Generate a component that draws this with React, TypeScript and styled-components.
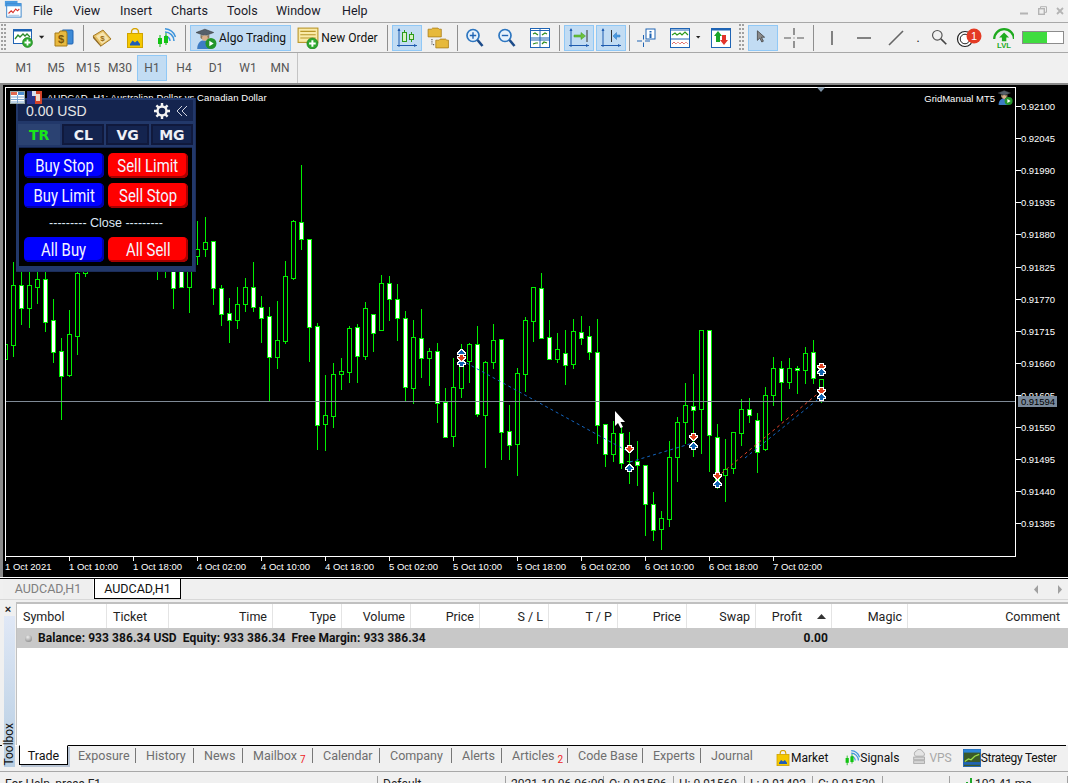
import React from "react";
import styled, { createGlobalStyle } from "styled-components";

const Global = createGlobalStyle`
  html, body { margin: 0; padding: 0; background: #f0f0f0; overflow: hidden; }
  #root { height: 783px; }
  * { box-sizing: border-box; }
`;

const UI = `Roboto, "Liberation Sans", sans-serif`;

const Page = styled.div`
  width: 1068px; height: 783px; display: flex; flex-direction: column; overflow: hidden;
  font-family: ${UI}; font-size: 12px; color: #1a1a1a; background: #f0f0f0;
`;
const MenuBar = styled.div`
  height: 23px; display: flex; align-items: center; padding: 0 0 1px 4px; border-bottom: 1px solid #a8a8a8; flex: none;
`;
const MenuItem = styled.span<{ $w: number }>`
  width: ${p => p.$w}px; font-size: 12.5px; color: #1a1a2a;
`;
const WinControls = styled.div`
  margin-left: auto; display: flex; gap: 9px; padding-right: 4px; align-items: center;
`;
const Toolbar = styled.div`
  height: 30px; display: flex; align-items: center; border-bottom: 1px solid #a8a8a8; flex: none;
`;
const Grip = styled.div<{ $ml?: number }>`
  width: 6px; height: 27px; margin-left: ${p => p.$ml ?? 0}px; margin-right: 2px;
  background: radial-gradient(circle at 1px 1px, #a0a0a0 1px, transparent 1.2px) 1px 0 / 3px 4px;
`;
const Sep = styled.div<{ $ml: number }>`
  width: 1px; height: 26px; background: #8f8f8f; margin-left: ${p => p.$ml}px; flex: none;
`;
const ToolBtn = styled.div<{ $w?: number; $ml?: number; $on?: boolean }>`
  width: ${p => p.$w ?? 30}px; height: 26px; margin-left: ${p => p.$ml ?? 0}px; flex: none;
  display: flex; align-items: center; justify-content: center; gap: 2px;
  background: ${p => (p.$on ? "#c2dcf3" : "transparent")};
  border: 1px solid ${p => (p.$on ? "#90c8f6" : "transparent")};
  font-size: 12px; color: #111; white-space: nowrap;
`;
const ProgressBar = styled.div`
  width: 42px; height: 13px; margin-left: 4px; border: 1px solid #8c8c8c; background: #fff; flex: none;
`;
const ProgressFill = styled.div`
  height: 100%; background: #3fdc3f;
`;
const TimeBar = styled.div`
  height: 32px; display: flex; align-items: center; padding-left: 8px; flex: none; border-bottom: 2px solid #8a8a8a;
`;
const TimeBtn = styled.div<{ $on?: boolean }>`
  width: ${p => (p.$on ? 30 : 32)}px; height: 26px; display: flex; align-items: center; justify-content: center;
  font-size: 12px; color: #555; flex: none;
  margin: ${p => (p.$on ? "0 1px" : "0")};
  background: ${p => (p.$on ? "#c2dcf3" : "transparent")};
  border: 1px solid ${p => (p.$on ? "#90c8f6" : "transparent")};
`;
const TimeEnd = styled.div`
  width: 1px; height: 30px; background: #c4c4c4; margin-left: 1px;
`;
const ChartArea = styled.div`
  position: relative; height: 493px; background: #000; flex: none; border-left: 3px solid #8a8a8a;
`;
const ChartSvg = styled.svg`
  display: block; font-family: "Liberation Sans", sans-serif; font-size: 9.5px;
`;
const TitleIcons = styled.div`
  position: absolute; left: 7px; top: 6px; display: flex; gap: 2px; z-index: 2;
`;
const EAPanel = styled.div`
  position: absolute; left: 13px; top: 13px; width: 180px; height: 174px; background: #22386a; padding: 2px;
  display: flex; flex-direction: column; border-right: 1px solid #1c2d5a; border-bottom: 1px solid #1c2d5a;
`;
const EAHeader = styled.div`
  height: 21px; background: #14244f; display: flex; align-items: center; padding: 0 5px 0 8px; color: #e6e6e6; gap: 6px;
  font: 14px "Liberation Sans", sans-serif; flex: none;
`;
const EAAmount = styled.span`
  margin-right: auto;
`;
const EATabs = styled.div`
  display: flex; gap: 2px; margin-top: 3px; height: 21px; flex: none;
`;
const EATab = styled.div<{ $on?: boolean }>`
  width: 43px; display: flex; align-items: center; justify-content: center;
  font: bold 14px "DejaVu Sans", "Liberation Sans", sans-serif;
  color: ${p => (p.$on ? "#19e619" : "#eef0f6")};
  background: ${p => (p.$on ? "#2b4272" : "#14244f")};
  border: ${p => (p.$on ? "0" : "2px solid #10193c")};
`;
const EABody = styled.div`
  flex: 1; background: #000; margin: 2px 1px 3px; border-top: 1px solid #14244f; padding: 5px 5px 0;
  display: grid; grid-template-columns: 80px 80px; column-gap: 4px; grid-template-rows: 25px 25px 19px 25px; row-gap: 5px; align-content: start;
`;
const EAButton = styled.div<{ $c: "blue" | "red" }>`
  border-radius: 5px; display: flex; align-items: center; justify-content: center;
  color: #f4f4ff;
  background: ${p => (p.$c === "blue" ? "#0000ff" : "#ff0000")};
  box-shadow: inset -2px -2px 0 ${p => (p.$c === "blue" ? "#0000a8" : "#a80000")};
`;
const EALabel = styled.span`
  font: 17.5px Roboto, sans-serif; transform: scaleX(0.85); white-space: nowrap;
`;
const EAClose = styled.div`
  grid-column: 1 / 3; display: flex; align-items: center; justify-content: center;
  font: 12.5px "Liberation Sans", sans-serif; color: #dde8f4; white-space: pre;
`;
const TabBar = styled.div`
  height: 21px; display: flex; flex: none; background: #f0f0f0; border-top: 1px solid #000; position: relative;
  box-shadow: 0 -1px 0 #fff;
`;
const ChartTab = styled.div<{ $on?: boolean }>`
  width: ${p => (p.$on ? 87 : 91)}px; margin-left: ${p => (p.$on ? 0 : 3)}px; height: 20px; display: flex; align-items: center; justify-content: center;
  font-size: 12.5px; color: ${p => (p.$on ? "#111" : "#808080")};
  background: ${p => (p.$on ? "#fff" : "#efefef")};
  border-right: 1px solid ${p => (p.$on ? "#000" : "#fff")};
  border-bottom: 1px solid ${p => (p.$on ? "#000" : "transparent")};
  border-left: ${p => (p.$on ? "1px solid #000" : "0")};
`;
const ScrollArrows = styled.div`
  margin-left: auto; display: flex; gap: 19px; align-items: center; padding-right: 5px;
`;
const Lower = styled.div`
  flex: none; height: 146px; display: flex; background: #f0f0f0; border-top: 1px solid #d8d8d8;
`;
const LeftStrip = styled.div`
  width: 16px; flex: none; display: flex; flex-direction: column; align-items: flex-end; padding-top: 4px;
  position: relative; z-index: 1;
`;
const CloseX = styled.div`
  width: 16px; text-align: center; font: bold 11px "Liberation Sans", sans-serif; line-height: 10px; color: #222; height: 12px; flex: none;
`;
const ToolboxBand = styled.div`
  width: 11px; height: 151px; flex: none; display: flex; align-items: flex-end; justify-content: center;
  background: linear-gradient(#e0e8f6, #b6cde2); margin-right: 1px;
`;
const ToolboxText = styled.span`
  writing-mode: vertical-rl; transform: rotate(180deg); font-size: 12px; color: #111; line-height: 11px; padding-top: 1px;
`;
const TradePane = styled.div`
  flex: 1; display: flex; flex-direction: column; background: #fff; border-top: 2px solid #c0c0c0; border-left: 1px solid #c0c0c0;
  margin-top: 2px;
`;
const HeaderRow = styled.div`
  height: 24px; display: grid; flex: none;
  grid-template-columns: 90px 62px 104px 69px 69px 69px 69px 69px 69px 69px 76px 76px 1fr;
`;
const HeadCell = styled.div<{ $left?: boolean; $last?: boolean }>`
  display: flex; align-items: center; font-size: 12.5px; color: #222; padding: 0 5px 0 6px;
  justify-content: ${p => (p.$left ? "flex-start" : "flex-end")};
  border-right: ${p => (p.$last ? "0" : "1px solid #e4e4e4")}; gap: 7px; white-space: nowrap;
  padding-right: ${p => (p.$last ? 8 : 5)}px;
`;
const SortArrow = styled.svg`
  margin-left: 8px;
`;
const BalanceRow = styled.div`
  height: 20px; background: #c8c8c8; display: flex; align-items: center; padding-left: 8px; flex: none;
  font-weight: 700; font-size: 12px; letter-spacing: 0.07px; white-space: pre; color: #111;
`;
const Bullet = styled.span`
  width: 7px; height: 7px; border-radius: 50%; margin-right: 6px; background: radial-gradient(circle at 40% 30%, #ececec, #777);
`;
const BalanceValue = styled.span`
  margin-left: auto; margin-right: 240px;
`;
const PaneFill = styled.div`
  flex: 1;
`;
const BottomBar = styled.div`
  height: 26px; display: flex; background: #f0f0f0; border-top: 1px solid #000; padding-left: 2px; flex: none; margin-right: 2px;
`;
const BottomGap = styled.div`
  width: 17px; height: 1px; margin-top: -1px; background: #fff; flex: none;
`;
const TradeTab = styled.div`
  width: 49px; height: 20px; margin-top: -1px; background: #fff; display: flex; align-items: center; justify-content: center;
  border: 1px solid #000; border-top: 1px solid #fff; font-size: 12.5px; color: #111; box-shadow: 2px 2px 0 #b8c4d4; flex: none;
`;
const BottomTab = styled.div<{ $w: number; $last?: boolean }>`
  width: ${p => p.$w}px; height: 18px; flex: none; display: flex; align-items: center; padding-left: 10px;
  font-size: 12.5px; color: #6e6e6e; white-space: nowrap; position: relative;
  &::after { content: ""; display: ${p => (p.$last ? "none" : "block")}; position: absolute; right: 0; top: 2px; bottom: 1px; width: 1px; background: #777; }
`;
const Badge = styled.span`
  color: #ee1c1c; font-size: 10px; margin-left: 3px; line-height: 1; align-self: flex-end; margin-bottom: -1px;
`;
const QuickLink = styled.div<{ $ml: number; $off?: boolean; $ls?: number }>`
  display: flex; align-items: center; margin-left: ${p => p.$ml}px; height: 24px; font-size: 12px;
  letter-spacing: ${p => p.$ls ?? 0}px;
  color: ${p => (p.$off ? "#a8a8a8" : "#111")}; white-space: nowrap;
`;
const StatusBar = styled.div`
  height: 12px; flex: none; border-top: 1px solid #a8a8a8; display: flex; background: #f0f0f0;
`;
const StatusCell = styled.div<{ $w: number }>`
  width: ${p => p.$w}px; flex: none; margin-top: 4px; padding: 1px 0 0 5px; font-size: 12px; line-height: 14px; height: 20px; white-space: nowrap;
  border-right: 1px solid #a0a0a0; display: flex; gap: 2px; color: #222;
`;
const PingSlot = styled.span`
  margin-left: 6px; display: flex;
`;

/* ---------- icons ---------- */
type SvgP = React.SVGProps<SVGSVGElement>;
const I = ({ s = 20, children, ...r }: SvgP & { s?: number }) => (
  <svg width={s} height={s} viewBox="0 0 20 20" {...r}>{children}</svg>
);
const PlusDot = ({ x = 14, y = 14 }: { x?: number; y?: number }) => (
  <g>
    <circle cx={x} cy={y} r="5" fill="#2fa82f" stroke="#1a7d1a" strokeWidth=".6" />
    <path d={`M${x - 3} ${y}h6M${x} ${y - 3}v6`} stroke="#fff" strokeWidth="1.8" />
  </g>
);
const IconLogo = () => (
  <I s={18}>
    <rect x="1" y="1" width="14" height="6" fill="#4a9ae0" />
    <rect x="3" y="4" width="16" height="15" fill="#fff" stroke="#2f7fc8" />
    <rect x="3" y="4" width="16" height="3" fill="#4a9ae0" />
    <path d="M5 15l3-3 2 2 3-4 2 2 2-2" fill="none" stroke="#d8332c" strokeWidth="1.2" />
    <path d="M5 17h12" stroke="#9ac0e0" />
  </I>
);
const IconNewChart = () => (
  <I>
    <rect x=".5" y="1.5" width="18" height="14" fill="#fff" stroke="#1f64b4" />
    <rect x=".5" y="1.5" width="18" height="2" fill="#1f64b4" />
    <path d="M2 11l3-4 2 2 3-3 2 2 2-2 3 3" fill="none" stroke="#2b8a2b" strokeWidth="1.3" />
    <PlusDot x={14.5} y={14.5} />
  </I>
);
const Caret = () => <svg width="8" height="5" viewBox="0 0 8 5"><path d="M0 0h7L3.5 4z" fill="#222" /></svg>;
const IconProfiles = () => (
  <I>
    <rect x="8" y="2" width="11" height="14" rx="1" fill="#3d8ad6" stroke="#1f64b4" />
    <path d="M1 5h4l1-2h6l1 2v13H1z" fill="#e8b93f" stroke="#a87c18" />
    <text x="7" y="15" fontSize="11" fontWeight="700" fill="#7a5608" textAnchor="middle" fontFamily="Liberation Sans">$</text>
  </I>
);
const IconBook = () => (
  <I>
    <path d="M1 8l10-6 8 9-10 7z" fill="#e6c065" stroke="#a67c28" />
    <path d="M1 8l8 10v1L1 10z" fill="#8a6420" />
    <path d="M4 8l7-4 6 7-7 5z" fill="#f7e4ad" />
    <text x="10.5" y="13" fontSize="8" fontWeight="700" fill="#9a6c10" textAnchor="middle" fontFamily="Liberation Sans">$</text>
  </I>
);
const IconBag = ({ s = 20 }: { s?: number }) => (
  <I s={s}>
    <path d="M6.5 6V4a3.5 3.5 0 017 0v2" fill="none" stroke="#d8a400" strokeWidth="1.4" />
    <rect x="2.5" y="5.5" width="15" height="14" fill="#f5c800" stroke="#cfa300" />
    <path d="M5 16l2.6-3.5 2.4 2 2.4-2L15 16v1.5H5z" fill="#1f5cb8" />
  </I>
);
const IconSignals = ({ s = 20 }: { s?: number }) => (
  <I s={s}>
    <path d="M9 8a5 5 0 015 5M9 4a9 9 0 019 9M9 .8A12.2 12.2 0 0119.5 9" fill="none" stroke="#3f95dc" strokeWidth="1.5" />
    <path d="M4 7v12M10 5v12" stroke="#12b312" />
    <rect x="2" y="10" width="4" height="6" fill="#12c412" />
    <rect x="8" y="8" width="4" height="7" fill="#12c412" />
  </I>
);
const IconHat = ({ s = 22 }: { s?: number }) => (
  <I s={s}>
    <path d="M1 5l8-3 8 3-8 3z" fill="#55606a" stroke="#333" strokeWidth=".5" />
    <path d="M5 7v3c2 2 6 2 8 0V7l-4 1.6z" fill="#8c7a5a" />
    <path d="M2 20c0-5 3-8 6-8s6 2 6 8z" fill="#3d7cc4" />
    <circle cx="9" cy="10" r="2.6" fill="#d9b08a" />
    <circle cx="14.5" cy="15" r="5" fill="#24952a" />
    <path d="M13 12.6v5l4-2.5z" fill="#fff" />
  </I>
);
const IconOrder = () => (
  <I s={22}>
    <rect x="1" y="1" width="18" height="13" fill="#faeaa8" stroke="#b89628" />
    <path d="M3 4h14M3 7h14M3 10h14" stroke="#b89628" />
    <PlusDot x={14} y={15} />
  </I>
);
const Axes = ({ children }: { children?: React.ReactNode }) => (
  <I>
    <path d="M2 1v18M0 17.5h20" stroke="#1f5cb0" strokeWidth="1" fill="none" />
    <path d="M2 0l-1.5 3h3zM20 17.5l-3-1.5v3z" fill="#1f5cb0" />
    {children}
  </I>
);
const IconCandles = () => (
  <Axes>
    <path d="M7.5 2v12M14.5 4v10" stroke="#2c9a1c" />
    <rect x="5.5" y="4.5" width="4" height="9" fill="#d6f2c0" stroke="#2c9a1c" />
    <rect x="12.5" y="6.5" width="4" height="5" fill="#d6f2c0" stroke="#2c9a1c" />
  </Axes>
);
const IconFolders = () => (
  <I s={22}>
    <path d="M1 2h3l1-1h5l1 1h2v7H1z" fill="#e6b93c" stroke="#a87c18" strokeWidth=".7" />
    <path d="M8 12h3l1-1h5l1 1h1.500v7H8z" fill="#e6b93c" stroke="#a87c18" strokeWidth=".7" />
    <path d="M4.500 11v5h2.500" stroke="#555" strokeDasharray="1 1" fill="none" />
  </I>
);
const IconZoom = ({ plus }: { plus?: boolean }) => (
  <I>
    <circle cx="8" cy="7.5" r="6" fill="#e6f1fb" stroke="#2d76c0" strokeWidth="1.7" />
    <path d="M12.5 12l5 6" stroke="#1c4c8a" strokeWidth="2.6" />
    <path d={plus ? "M4.8 7.5h6.4M8 4.3v6.4" : "M4.8 7.5h6.4"} stroke="#1f64b4" strokeWidth="1.4" />
  </I>
);
const IconTile = () => (
  <I>
    <rect x=".5" y=".5" width="19" height="19" fill="#fff" stroke="#1f64b4" />
    <path d="M.5 2.5h19M10 .5v19M.5 10h19M.5 12h19" stroke="#1f64b4" />
    <path d="M3 6l2-1 3 2M12 7l3-2 2 1M3 16l3-1 2 0M12 16l2-2 3 1" fill="none" stroke="#2c8a1c" strokeWidth="1.2" />
  </I>
);
const IconAutoScroll = () => (
  <Axes>
    <path d="M18 2v12" stroke="#333" />
    <path d="M5 7h7V4.5L16.5 8 12 11.5V9H5z" fill="#6cc23c" stroke="#3c9a1c" strokeWidth=".5" />
  </Axes>
);
const IconShift = () => (
  <Axes>
    <path d="M10.5 2v12" stroke="#333" />
    <path d="M19 7h-3.5V4.5L12 8l3.5 3.5V9H19z" fill="#4a9ae0" stroke="#2d76c0" strokeWidth=".5" />
  </Axes>
);
const IconInfo = () => (
  <I>
    <path d="M0 13h5M8 13h5M6.5 7v4.5M6.5 14.5V19" stroke="#1f64b4" strokeWidth="1" />
    <rect x="9" y="1" width="9" height="10" fill="#fff" stroke="#1f64b4" />
    <path d="M12.5 3h2v1.5h-2zM12.5 5.5h2V10h-2z" fill="#1f64b4" />
  </I>
);
const IconIndicators = () => (
  <I>
    <rect x=".5" y=".5" width="19" height="19" fill="#fff" stroke="#1f64b4" />
    <path d="M.5 2h19M.5 11h19" stroke="#1f64b4" />
    <path d="M2 7l3-2 2 2 3-2 2 2 3-3 3 3" fill="none" stroke="#2c9a1c" strokeWidth="1.2" />
    <path d="M2 16l2-2 2 2 2-2 2 2 2-2 2 2 2-2 2 2" fill="none" stroke="#d8332c" strokeDasharray="1 .6" />
  </I>
);
const IconArrows = () => (
  <I>
    <rect x=".5" y=".5" width="19" height="19" fill="#fff" stroke="#1f64b4" />
    <rect x=".5" y=".5" width="19" height="2" fill="#1f64b4" />
    <path d="M7 3l4 5H9v6H5V8H3z" fill="#19a52a" />
    <path d="M13 17l4-5h-2V7h-4v5H9z" fill="#e2332a" />
  </I>
);
const IconCursor = () => (
  <I s={16}>
    <path d="M3 1v12l3-3 2.5 5 2-1-2.4-5H12z" fill="#8a8a8a" stroke="#444" />
  </I>
);
const IconCross = () => (
  <I>
    <path d="M0 10h7M13 10h7M10 0v7M10 13v7" stroke="#555" strokeWidth="1.2" />
    <path d="M9.5 9.5h1v1h-1z" fill="#555" />
  </I>
);
const IconVLine = () => <I><path d="M10 3v14" stroke="#666" strokeWidth="1.6" /></I>;
const IconHLine = () => <I><path d="M3 10h14" stroke="#666" strokeWidth="1.6" /></I>;
const IconTrend = () => <I><path d="M3 17L17 3" stroke="#666" strokeWidth="1.6" /></I>;
const IconSearch = () => (
  <I s={18}>
    <circle cx="7" cy="7" r="5.3" fill="none" stroke="#555" strokeWidth="1.3" />
    <path d="M11 11l6 6" stroke="#444" strokeWidth="1.8" />
  </I>
);
const IconCircle = () => (
  <svg width="28" height="20" viewBox="0 0 28 20">
    <circle cx="9" cy="11" r="7.5" fill="#fff" stroke="#222" strokeWidth="1.2" />
    <circle cx="9" cy="11" r="4.8" fill="none" stroke="#222" />
    <circle cx="18" cy="8" r="7.5" fill="#e43b24" />
    <text x="18" y="12" fontSize="11" fill="#fff" textAnchor="middle" fontFamily="Liberation Sans">1</text>
  </svg>
);
const IconLvl = () => (
  <I s={22}>
    <path d="M2 11a9 9 0 0118 0" fill="none" stroke="#1eaa1e" strokeWidth="2" />
    <path d="M11 5l4.500 4.500H13V13H9V9.500H6.500z" fill="#1eaa1e" />
    <text x="11" y="19.500" fontSize="7" fontWeight="700" fill="#1eaa1e" textAnchor="middle" fontFamily="Liberation Sans">LVL</text>
  </I>
);
const IconGear = () => (
  <I s={16}>
    <circle cx="10" cy="10" r="5.600" fill="none" stroke="#f2f2f2" strokeWidth="3" />
    <path d="M10 0v4M10 16v4M0 10h4M16 10h4M3 3l2.800 2.800M14.200 14.200L17 17M3 17l2.800-2.800M14.200 5.800L17 3" stroke="#f2f2f2" strokeWidth="3" />
  </I>
);
const IconCollapse = () => (
  <svg width="12" height="12" viewBox="0 0 12 12">
    <path d="M6 1L1 6l5 5M11 1L6 6l5 5" fill="none" stroke="#d0d4e0" />
  </svg>
);
const IconTable = () => (
  <svg width="15" height="13" viewBox="0 0 15 13">
    <rect x=".5" y=".5" width="14" height="12" fill="#fff" stroke="#9aa" />
    <rect x="1" y="1" width="6" height="3" fill="#e26a50" />
    <rect x="8" y="1" width="6" height="3" fill="#4d8ed0" />
    <path d="M1 6h13M1 8.500h13M1 11h13M7.500 4v8" stroke="#7da6d0" />
  </svg>
);
const IconFlag = () => (
  <svg width="15" height="13" viewBox="0 0 15 13">
    <rect width="8" height="13" fill="#28348a" />
    <rect x="8" width="7" height="13" fill="#d4442a" />
    <rect x="5" y="0" width="4" height="5" fill="#d9e0ee" />
    <rect x="9" y="3" width="4" height="7" fill="#f0d8c8" />
  </svg>
);
const IconMinimize = () => <svg width="9" height="9" viewBox="0 0 9 9"><path d="M0 7.500h8" stroke="#b4b4b4" strokeWidth="2" /></svg>;
const IconRestore = () => (
  <svg width="9" height="9" viewBox="0 0 9 9"><path d="M2.500 2V.7h6v5.600H7" fill="none" stroke="#b4b4b4" /><rect x=".7" y="2.700" width="5.600" height="5.600" fill="none" stroke="#b4b4b4" strokeWidth="1.400" /></svg>
);
const IconClose = () => <svg width="8" height="8" viewBox="0 0 8 8"><path d="M1 1l6 6M7 1L1 7" stroke="#b4b4b4" strokeWidth="1.800" /></svg>;
const IconScroll = ({ left }: { left?: boolean }) => (
  <svg width="5" height="9" viewBox="0 0 5 9"><path d={left ? "M4 0v9L0 4.500z" : "M0 0v9l4-4.500z"} fill="#a0a0a0" /></svg>
);
const IconVps = () => (
  <I s={18}>
    <path d="M5 8a3.500 3.500 0 011-6 4 4 0 017 1 3 3 0 011 5z" fill="#e4e4e4" stroke="#a8a8a8" />
    <rect x="3" y="9" width="12" height="3" fill="#d8d8d8" stroke="#a8a8a8" />
    <rect x="3" y="13" width="12" height="3" fill="#d8d8d8" stroke="#a8a8a8" />
  </I>
);
const IconTester = () => (
  <I s={18}>
    <rect x=".5" y=".5" width="19" height="19" fill="#3a5a2a" stroke="#1f64b4" />
    <rect x=".5" y=".5" width="19" height="3.500" fill="#2a84d8" />
    <path d="M2 14l4-3 3 1 4-4 5-2" fill="none" stroke="#9be04a" strokeWidth="1.400" />
    <path d="M.5 16h19" stroke="#1f64b4" strokeWidth="3" />
  </I>
);
const IconPing = () => (
  <svg width="12" height="12" viewBox="0 0 12 12"><path d="M1 8h2v4H1zM5 5h2v7H5zM9 1h2v11H9z" fill="#1fa82a" /></svg>
);

/* ---------- chart data: [x, bodyTop, bodyBottom, high, low, filled] ---------- */
const CANDLES: number[][] = [
  [5,344,359,340,375,0],[13,285,345,262,356,0],[21,285,308,262,324,1],[29,285,308,262,327,0],[37,279,287,262,303,0],
  [45,279,322,272,331,1],[53,320,352,299,362,1],[61,351,376,338,419,1],[69,334,375,310,376,0],[77,273,336,262,354,0],
  [85,265,273,260,276,0],[157,250,262,240,279,0],[165,250,262,240,277,0],[173,250,288,240,308,1],[181,250,287,240,287,1],
  [189,250,287,240,312,0],[197,249,256,221,264,0],[205,242,249,217,256,0],[213,241,288,241,304,1],[221,288,314,285,325,1],
  [229,313,320,298,342,1],[237,304,320,287,328,0],[245,287,304,278,311,0],[253,287,307,262,311,1],[261,307,318,296,342,1],
  [269,316,357,307,400,1],[277,340,357,301,368,0],[285,276,341,261,343,0],[293,221,278,220,279,0],[301,222,239,165,249,1],
  [309,239,327,239,361,1],[317,326,425,323,449,1],[325,415,424,375,450,0],[333,374,416,363,427,0],[341,371,374,358,389,0],
  [349,328,372,326,382,0],[357,327,356,324,382,1],[365,308,356,302,359,0],[373,314,333,314,351,1],[381,283,330,275,330,0],
  [389,283,299,276,320,1],[397,299,318,284,340,1],[405,318,387,311,400,1],[413,337,388,320,403,0],[421,338,358,309,377,1],
  [429,351,358,348,385,0],[437,351,403,343,422,1],[445,402,437,388,437,1],[453,387,436,358,446,0],[461,362,388,344,397,0],
  [469,344,361,343,382,0],[477,344,414,326,416,1],[485,362,415,361,467,0],[493,340,362,324,368,0],[501,339,432,339,459,1],
  [509,431,445,405,459,1],[517,373,444,368,475,0],[525,320,374,317,391,0],[533,287,321,287,341,0],[541,288,338,273,338,1],
  [549,337,359,320,359,1],[557,349,359,333,362,0],[565,353,365,330,384,1],[573,331,364,319,368,0],[581,332,338,316,344,1],
  [589,336,352,326,359,1],[597,352,425,319,443,1],[605,424,454,424,466,1],[613,433,454,421,461,0],[621,433,463,427,468,1],
  [629,461,462,432,483,2],[637,461,465,441,485,1],[645,465,504,465,535,1],[653,504,530,492,540,1],[661,518,529,511,549,0],
  [669,457,519,441,526,0],[677,422,457,417,481,0],[685,405,422,383,443,0],[693,406,410,374,456,1],[701,330,409,330,453,0],
  [709,330,435,330,471,1],[717,437,483,424,488,1],[725,469,475,439,501,0],[733,432,468,432,473,0],[741,409,433,399,445,0],
  [749,409,415,398,422,1],[757,420,452,413,472,1],[765,395,449,387,450,0],[773,368,395,357,405,0],[781,368,382,361,420,1],
  [789,368,382,358,388,0],[797,368,370,366,393,1],[805,353,370,347,383,0],[813,352,378,340,383,1],[821,379,400,379,402,0],
];
const PRICES = ["0.92100","0.92045","0.91990","0.91935","0.91880","0.91825","0.91770","0.91715","0.91660","0.91605","0.91550","0.91495","0.91440","0.91385"];
const TIMES = ["1 Oct 2021","1 Oct 10:00","1 Oct 18:00","4 Oct 02:00","4 Oct 10:00","4 Oct 18:00","5 Oct 02:00","5 Oct 10:00","5 Oct 18:00","6 Oct 02:00","6 Oct 10:00","6 Oct 18:00","7 Oct 02:00"];
const MARKS: [number, number, "d" | "u"][] = [
  [461,353,"u"],[461,363,"u"],[461,358,"d"],[629,449,"d"],[629,468,"u"],[693,437,"d"],[693,446,"u"],
  [717,476,"d"],[717,484,"u"],[821,367,"d"],[821,372,"u"],[821,391,"d"],[821,397,"u"],
];

const Candle = ({ d }: { d: number[] }) => {
  const [x, t, b, h, l, f] = d;
  return (
    <g shapeRendering="crispEdges">
      <rect x={x} y={h} width={1} height={l - h + 1} fill="#00f000" />
      {f === 2 ? <rect x={x - 2} y={t} width={5} height={1} fill="#00f000" /> :
        <rect x={x - 1.5} y={t + 0.5} width={4} height={b - t} fill={f ? "#fff" : "#000"} stroke="#00f000" />}
    </g>
  );
};
/* pixel rows of the arrow, from its tail to its point */
const ARROW_ROWS = [3, 3, 7, 5, 3, 1];
const Marker = ({ m }: { m: [number, number, "d" | "u"] }) => {
  const [x, y, k] = m;
  const rowY = (i: number) => (k === "d" ? y - 3 + i : y + 2 - i);
  const color = k === "d" ? "#e0401f" : "#0f62b0";
  return (
    <g shapeRendering="crispEdges">
      {ARROW_ROWS.map((w, i) => (
        <rect key={`o${i}`} x={x - (w - 1) / 2 - 1} y={rowY(i) - 1} width={w + 2} height={3} fill="#fff" />
      ))}
      {ARROW_ROWS.map((w, i) => (
        <rect key={`i${i}`} x={x - (w - 1) / 2} y={rowY(i)} width={w} height={1} fill={color} />
      ))}
    </g>
  );
};

const Chart = () => (
  <ChartSvg width={1065} height={493} viewBox="3 85 1065 493">
    <defs>
      <clipPath id="plot"><rect x="6" y="88" width="1009" height="468" /></clipPath>
    </defs>
    <text x="47" y="100.500" fill="#fff" letterSpacing=".1">AUDCAD, H1:  Australian Dollar vs Canadian Dollar</text>
    <g clipPath="url(#plot)">
      {CANDLES.map(c => <Candle key={c[0]} d={c} />)}
    </g>
    <path d="M461 360L629 452M630 462L693 443" stroke="#1566c0" strokeDasharray="3 3" fill="none" />
    <path d="M717 477L821 391" stroke="#e0442a" strokeDasharray="3 3" fill="none" />
    <path d="M745 458L821 397" stroke="#1566c0" strokeDasharray="3 3" fill="none" />
    {MARKS.map((m, i) => <Marker key={i} m={m} />)}
    <rect x="5" y="401" width="1011" height="1" fill="#7f8a96" />
    <rect x="5.500" y="87.500" width="1010" height="469" fill="none" stroke="#fff" />
    <path d="M817 87.500h8l-4 4.500z" fill="#7f95a8" />
    <text x="995" y="101.500" fill="#fff" textAnchor="end">GridManual MT5</text>
    <g transform="translate(997 89)"><IconHat s={16} /></g>
    {PRICES.map((p, i) => {
      const y = Math.round(106 + i * 32.1);
      return (
        <g key={p}>
          <rect x="1016" y={y} width="5" height="1" fill="#fff" />
          <text x="1021" y={y + 4} fill="#fff" letterSpacing="-.05">{p}</text>
        </g>
      );
    })}
    <rect x="1018" y="396" width="39" height="11" fill="#7a8a9c" />
    <text x="1021" y="405" fill="#000" letterSpacing="-.05">0.91594</text>
    {TIMES.map((t, i) => (
      <g key={t}>
        <rect x={5 + 64 * i} y="557" width="1" height="4" fill="#fff" />
        <text x={5 + 64 * i} y="570" fill="#fff">{t}</text>
      </g>
    ))}
    <path d="M615 411v15l3-3 2.500 5 2.500-1-2.500-5h4.500z" fill="#fff" />
  </ChartSvg>
);

const COLS: [string, boolean?][] = [["Symbol", true],["Ticket", true],["Time"],["Type"],["Volume"],["Price"],["S / L"],["T / P"],["Price"],["Swap"]];
const TABS: [string, number, string?][] = [["Exposure",68],["History",58],["News",49],["Mailbox",70,"7"],["Calendar",67],["Company",72],["Alerts",50],["Articles",66,"2"],["Code Base",75],["Experts",58]];

export default function App() {
  return (
    <Page>
      <Global />
      <MenuBar>
        <MenuItem $w={29}><IconLogo /></MenuItem>
        <MenuItem $w={40}>File</MenuItem>
        <MenuItem $w={47}>View</MenuItem>
        <MenuItem $w={51}>Insert</MenuItem>
        <MenuItem $w={56}>Charts</MenuItem>
        <MenuItem $w={49}>Tools</MenuItem>
        <MenuItem $w={66}>Window</MenuItem>
        <MenuItem $w={40}>Help</MenuItem>
        <WinControls><IconMinimize /><IconRestore /><IconClose /></WinControls>
      </MenuBar>
      <Toolbar>
        <Grip />
        <ToolBtn><IconNewChart /></ToolBtn>
        <ToolBtn $w={8}><Caret /></ToolBtn>
        <ToolBtn $ml={3}><IconProfiles /></ToolBtn>
        <Sep $ml={4} />
        <ToolBtn $ml={3}><IconBook /></ToolBtn>
        <ToolBtn $ml={3}><IconBag /></ToolBtn>
        <ToolBtn $ml={1}><IconSignals /></ToolBtn>
        <Sep $ml={4} />
        <ToolBtn $w={101} $ml={4} $on><IconHat />Algo Trading</ToolBtn>
        <ToolBtn $w={83} $ml={5}><IconOrder />New Order</ToolBtn>
        <Sep $ml={8} />
        <ToolBtn $ml={4} $on><IconCandles /></ToolBtn>
        <ToolBtn $ml={1}><IconFolders /></ToolBtn>
        <Sep $ml={4} />
        <ToolBtn $ml={2}><IconZoom plus /></ToolBtn>
        <ToolBtn $ml={2}><IconZoom /></ToolBtn>
        <ToolBtn $ml={3}><IconTile /></ToolBtn>
        <Sep $ml={4} />
        <ToolBtn $ml={4} $on><IconAutoScroll /></ToolBtn>
        <ToolBtn $ml={2} $on><IconShift /></ToolBtn>
        <Sep $ml={3} />
        <ToolBtn $ml={2}><IconInfo /></ToolBtn>
        <ToolBtn $ml={3}><IconIndicators /></ToolBtn>
        <ToolBtn $w={7}><Caret /></ToolBtn>
        <ToolBtn $ml={4}><IconArrows /></ToolBtn>
        <Grip $ml={2} />
        <ToolBtn $ml={2} $on><IconCursor /></ToolBtn>
        <ToolBtn $ml={1}><IconCross /></ToolBtn>
        <Sep $ml={4} />
        <ToolBtn $ml={3}><IconVLine /></ToolBtn>
        <ToolBtn $ml={2}><IconHLine /></ToolBtn>
        <ToolBtn $ml={2}><IconTrend /></ToolBtn>
        <ToolBtn $w={14}>.</ToolBtn>
        <ToolBtn><IconSearch /></ToolBtn>
        <ToolBtn><IconCircle /></ToolBtn>
        <ToolBtn $ml={3}><IconLvl /></ToolBtn>
        <ProgressBar><ProgressFill style={{ width: "60%" }} /></ProgressBar>
      </Toolbar>
      <TimeBar>
        {["M1","M5","M15","M30"].map(t => <TimeBtn key={t}>{t}</TimeBtn>)}
        <TimeBtn $on>H1</TimeBtn>
        {["H4","D1","W1","MN"].map(t => <TimeBtn key={t}>{t}</TimeBtn>)}
        <TimeEnd />
      </TimeBar>
      <ChartArea>
        <Chart />
        <TitleIcons><IconTable /><IconFlag /></TitleIcons>
        <EAPanel>
          <EAHeader>
            <EAAmount>0.00 USD</EAAmount>
            <IconGear />
            <IconCollapse />
          </EAHeader>
          <EATabs>
            <EATab $on>TR</EATab><EATab>CL</EATab><EATab>VG</EATab><EATab>MG</EATab>
          </EATabs>
          <EABody>
            <EAButton $c="blue"><EALabel>Buy Stop</EALabel></EAButton>
            <EAButton $c="red"><EALabel>Sell Limit</EALabel></EAButton>
            <EAButton $c="blue"><EALabel>Buy Limit</EALabel></EAButton>
            <EAButton $c="red"><EALabel>Sell Stop</EALabel></EAButton>
            <EAClose>--------- Close ---------</EAClose>
            <EAButton $c="blue"><EALabel>All Buy</EALabel></EAButton>
            <EAButton $c="red"><EALabel>All Sell</EALabel></EAButton>
          </EABody>
        </EAPanel>
      </ChartArea>
      <TabBar>
        <ChartTab>AUDCAD,H1</ChartTab>
        <ChartTab $on>AUDCAD,H1</ChartTab>
        <ScrollArrows><IconScroll left /><IconScroll /></ScrollArrows>
      </TabBar>
      <Lower>
        <LeftStrip>
          <CloseX>×</CloseX>
          <ToolboxBand><ToolboxText>Toolbox</ToolboxText></ToolboxBand>
        </LeftStrip>
        <TradePane>
          <HeaderRow>
            {COLS.map(([c, l], i) => <HeadCell key={i} $left={l}>{c}</HeadCell>)}
            <HeadCell>Profit <SortArrow width="9" height="5" viewBox="0 0 9 5"><path d="M4.500 0L9 5H0z" fill="#333" /></SortArrow></HeadCell>
            <HeadCell>Magic</HeadCell>
            <HeadCell $last>Comment</HeadCell>
          </HeaderRow>
          <BalanceRow>
            <Bullet />Balance: 933 386.34 USD  Equity: 933 386.34  Free Margin: 933 386.34
            <BalanceValue>0.00</BalanceValue>
          </BalanceRow>
          <PaneFill />
        </TradePane>
      </Lower>
      <BottomBar>
        <BottomGap />
        <TradeTab>Trade</TradeTab>
        {TABS.map(([n, w, b]) => <BottomTab key={n} $w={w}>{n}{b && <Badge>{b}</Badge>}</BottomTab>)}
        <BottomTab $w={60} $last>Journal</BottomTab>
        <QuickLink $ml={14}><IconBag s={16} />Market</QuickLink>
        <QuickLink $ml={16}><IconSignals s={16} />Signals</QuickLink>
        <QuickLink $ml={12} $off><IconVps />VPS</QuickLink>
        <QuickLink $ml={11} $ls={-0.3}><IconTester />Strategy Tester</QuickLink>
      </BottomBar>
      <StatusBar>
        <StatusCell $w={378}>For Help, press F1</StatusCell>
        <StatusCell $w={128}>Default</StatusCell>
        <StatusCell $w={98}>2021.10.06 06:00</StatusCell>
        <StatusCell $w={70}>O: 0.91506</StatusCell>
        <StatusCell $w={71}>H: 0.91560</StatusCell>
        <StatusCell $w={68}>L: 0.91492</StatusCell>
        <StatusCell $w={70}>C: 0.91529</StatusCell>
        <StatusCell $w={67} />
        <StatusCell $w={118}><PingSlot><IconPing /></PingSlot>102.41 ms</StatusCell>
      </StatusBar>
    </Page>
  );
}
